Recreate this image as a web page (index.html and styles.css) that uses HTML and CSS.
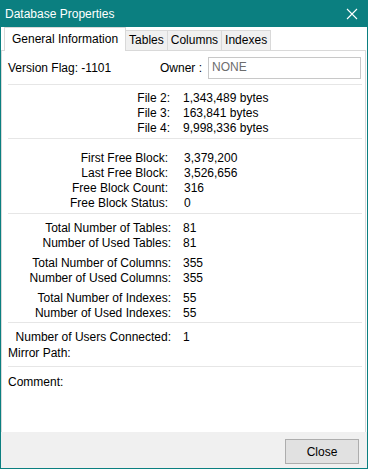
FILE: index.html
```html
<!DOCTYPE html>
<html>
<head>
<meta charset="utf-8">
<link rel="stylesheet" href="styles.css">
</head>
<body>
<div class="window">
  <div class="titlebar">
    <span class="title">Database Properties</span>
    <svg class="close-x" width="12" height="12" viewBox="0 0 12 12"><path d="M1 1L11 11M11 1L1 11" stroke="#fff" stroke-width="1.1" fill="none"/></svg>
  </div>
  <div class="tabs">
    <div class="tab active">General Information</div>
    <div class="tab">Tables</div>
    <div class="tab">Columns</div>
    <div class="tab">Indexes</div>
  </div>
  <div class="panel">
    <div class="top-row">
      <span class="version">Version Flag: -1101</span>
      <span class="owner-label">Owner :</span>
      <div class="owner-box">NONE</div>
    </div>
    <div class="sep sep1"></div>
    <div class="grid g-files">
      <span class="lbl">File 2:</span><span class="val">1,343,489 bytes</span>
      <span class="lbl">File 3:</span><span class="val">163,841 bytes</span>
      <span class="lbl">File 4:</span><span class="val">9,998,336 bytes</span>
    </div>
    <div class="sep sep2"></div>
    <div class="grid g-blocks">
      <span class="lbl">First Free Block:</span><span class="val">3,379,200</span>
      <span class="lbl">Last Free Block:</span><span class="val">3,526,656</span>
      <span class="lbl">Free Block Count:</span><span class="val">316</span>
      <span class="lbl">Free Block Status:</span><span class="val">0</span>
    </div>
    <div class="sep sep3"></div>
    <div class="grid g-tables">
      <span class="lbl">Total Number of Tables:</span><span class="val">81</span>
      <span class="lbl">Number of Used Tables:</span><span class="val">81</span>
    </div>
    <div class="grid g-cols">
      <span class="lbl">Total Number of Columns:</span><span class="val">355</span>
      <span class="lbl">Number of Used Columns:</span><span class="val">355</span>
    </div>
    <div class="grid g-idx">
      <span class="lbl">Total Number of Indexes:</span><span class="val">55</span>
      <span class="lbl">Number of Used Indexes:</span><span class="val">55</span>
    </div>
    <div class="sep sep4"></div>
    <div class="grid g-users">
      <span class="lbl">Number of Users Connected:</span><span class="val">1</span>
    </div>
    <div class="mirror">Mirror Path:</div>
    <div class="sep sep5"></div>
    <div class="comment">Comment:</div>
  </div>
  <div class="footer">
    <button class="btn">Close</button>
  </div>
</div>
</body>
</html>
```
FILE: styles.css
```css
html, body {
  margin: 0;
  padding: 0;
  background: #ffffff;
}
body {
  font-family: "Segoe UI", "Liberation Sans", Arial, sans-serif;
  font-size: 12px;
  color: #000;
}
.window {
  width: 368px;
  height: 469px;
  box-sizing: border-box;
  border: 1px solid #0b7f80;
  border-top: none;
  display: flex;
  flex-direction: column;
  background: #fff;
}
.titlebar {
  height: 27px;
  margin: 0 -1px;
  background: #0b7f80;
  color: #fff;
  display: flex;
  align-items: center;
  justify-content: space-between;
  padding: 0 10px 0 5px;
  flex-shrink: 0;
}
.title {
  font-size: 12px;
  line-height: 16px;
}
.close-x {
  display: block;
}
.tabs {
  height: 23px;
  display: flex;
  align-items: flex-end;
  padding-left: 3px;
  flex-shrink: 0;
  position: relative;
  z-index: 1;
}
.tab {
  height: 20px;
  box-sizing: border-box;
  border: 1px solid #d9d9d9;
  border-bottom: none;
  background: #f0f0f0;
  line-height: 19px;
  padding: 0 3px 0 3px;
  margin-left: -1px;
}
.tab.active {
  height: 24px;
  margin-bottom: -1px;
  background: #fff;
  line-height: 22px;
  padding: 0 7px 0 7px;
  margin-left: 0;
  margin-right: 0;
}
.tab.active + .tab {
  margin-left: 0;
  border-left: none;
}
.panel {
  flex: 1;
  border: 1px solid #d9d9d9;
  border-bottom: none;
  margin-right: 1px;
  padding: 6px 3px 0 6px;
  display: flex;
  flex-direction: column;
}
.top-row {
  display: flex;
  align-items: center;
  height: 22px;
}
.version {
  width: 152px;
}
.owner-label {
  width: 48px;
}
.owner-box {
  width: 153px;
  height: 22px;
  box-sizing: border-box;
  border: 1px solid #c8c8c8;
  color: #6d6d6d;
  padding-left: 3px;
  line-height: 19px;
}
.sep {
  height: 1px;
  background: #e6e6e6;
}
.sep1 { margin-top: 5px; }
.sep2 { margin-top: 2px; }
.sep3 { margin-top: 2px; }
.sep4 { margin-top: 1px; }
.sep5 { margin-top: 5px; }
.grid {
  display: grid;
  grid-template-columns: 163px auto;
  column-gap: 12px;
  line-height: 15px;
}
.lbl {
  text-align: right;
}
.g-files { margin-top: 6px; grid-template-columns: 162px auto; column-gap: 13px; }
.g-blocks { margin-top: 12px; grid-template-columns: 160px auto; column-gap: 16px; }
.g-tables { margin-top: 7px; }
.g-cols { margin-top: 5px; }
.g-idx { margin-top: 5px; }
.g-users { margin-top: 7px; }
.mirror {
  line-height: 15px;
  margin-top: 1px;
}
.comment {
  line-height: 15px;
  margin-top: 8px;
}
.footer {
  height: 36px;
  background: #f0f0f0;
  flex-shrink: 0;
  display: flex;
  justify-content: flex-end;
  align-items: flex-start;
  padding: 7px 8px 0 0;
  box-sizing: border-box;
}
.btn {
  width: 74px;
  height: 25px;
  box-sizing: border-box;
  background: #e1e1e1;
  border: 1px solid #adadad;
  font-family: "Segoe UI", "Liberation Sans", Arial, sans-serif;
  font-size: 12px;
  color: #000;
  padding: 0;
  margin: 0;
}
```
